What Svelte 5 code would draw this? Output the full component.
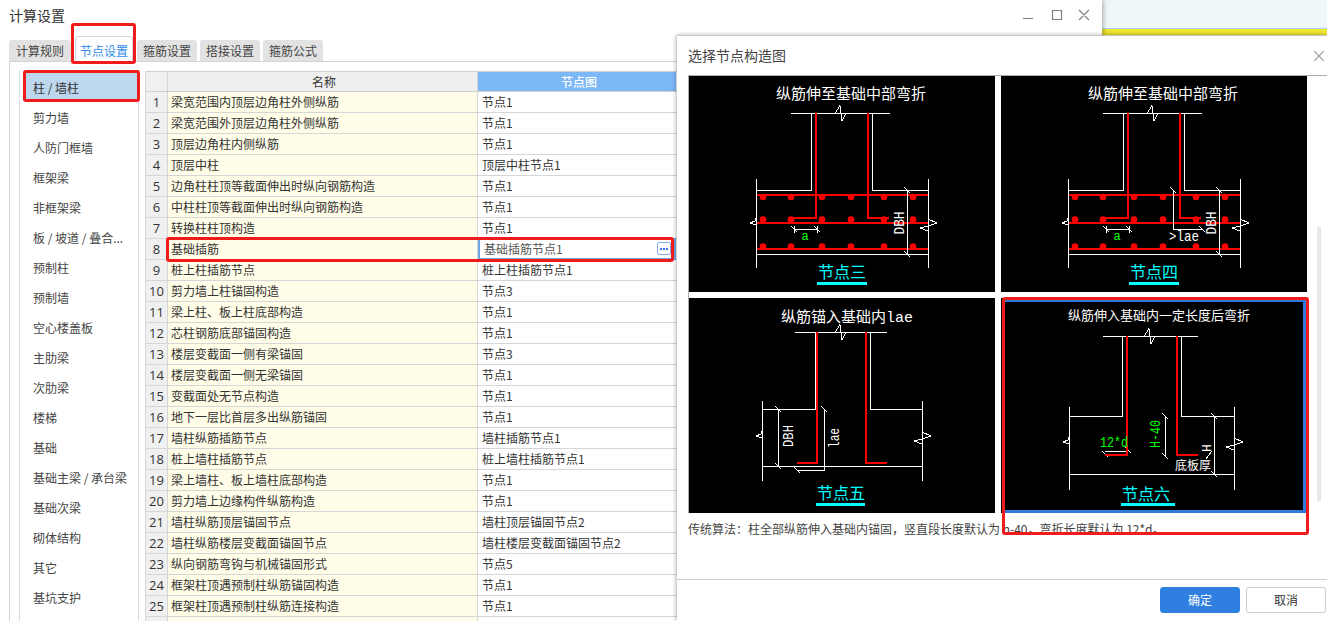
<script>
  const rows = [
    ['梁宽范围内顶层边角柱外侧纵筋','节点1'],['梁宽范围外顶层边角柱外侧纵筋','节点1'],['顶层边角柱内侧纵筋','节点1'],['顶层中柱','顶层中柱节点1'],
    ['边角柱柱顶等截面伸出时纵向钢筋构造','节点1'],['中柱柱顶等截面伸出时纵向钢筋构造','节点1'],['转换柱柱顶构造','节点1'],['基础插筋','基础插筋节点1'],
    ['桩上柱插筋节点','桩上柱插筋节点1'],['剪力墙上柱锚固构造','节点3'],['梁上柱、板上柱底部构造','节点1'],['芯柱钢筋底部锚固构造','节点1'],
    ['楼层变截面一侧有梁锚固','节点3'],['楼层变截面一侧无梁锚固','节点1'],['变截面处无节点构造','节点1'],['地下一层比首层多出纵筋锚固','节点1'],
    ['墙柱纵筋插筋节点','墙柱插筋节点1'],['桩上墙柱插筋节点','桩上墙柱插筋节点1'],['梁上墙柱、板上墙柱底部构造','节点1'],['剪力墙上边缘构件纵筋构造','节点1'],
    ['墙柱纵筋顶层锚固节点','墙柱顶层锚固节点2'],['墙柱纵筋楼层变截面锚固节点','墙柱楼层变截面锚固节点2'],['纵向钢筋弯钩与机械锚固形式','节点5'],
    ['框架柱顶遇预制柱纵筋锚固构造','节点1'],['框架柱顶遇预制柱纵筋连接构造','节点1'],['','']
  ];
  const menu = ['柱 / 墙柱','剪力墙','人防门框墙','框架梁','非框架梁','板 / 坡道 / 叠合...','预制柱','预制墙','空心楼盖板','主肋梁','次肋梁','楼梯','基础','基础主梁 / 承台梁','基础次梁','砌体结构','其它','基坑支护'];
  const tabs = ['计算规则','节点设置','箍筋设置','搭接设置','箍筋公式'];
  const dots = [74,102,133,162,195,224];
</script>

{#snippet brk(c, y)}
  <polyline class="w" points="{c-6},{y} {c-1},{y-8} {c+1},{y+7} {c+5},{y}" />
{/snippet}
{#snippet sideL(x, y)}
  <polyline class="w" points="{x},{y-5} {x-1},{y-2} {x-6},{y} {x},{y+2}" />
{/snippet}
{#snippet sideR(x, y)}
  <polyline class="w" points="{x},{y-4} {x+9},{y} {x},{y+3} {x-8},{y+5} {x},{y+8}" />
{/snippet}
{#snippet tick(x, y)}
  <line class="w" x1={x-3} y1={y-3} x2={x+3} y2={y+3} />
{/snippet}
{#snippet base(title, label)}
  <text class="title" x="162" y="23" text-anchor="middle">{title}</text>
  <path class="w" d="M102 37.5H201M122.5 37.5V114.5H67.5M183.5 37.5V114.5H239.5M67.5 103V192M239.5 103V192M67.5 178.5H239.5" />
  {@render brk(152, 37.5)}
  <path class="r" d="M127 37V142H104M179 37V142H200" />
  <path class="r" d="M68 119H239M68 147H239M68 173H239" />
  {#each dots as x}
    <circle class="dot" cx={x} cy="121" r="3.3" />
    <circle class="dot" cx={x} cy="143.5" r="3.3" />
    <circle class="dot" cx={x} cy="170.5" r="3.3" />
  {/each}
  <path class="w" d="M218.5 114.5V178.5M105.5 153.5H128.5M105.5 150V157M128.5 150V157" />
  {@render tick(218, 114)}{@render tick(218, 178)}{@render tick(105, 153)}{@render tick(128, 153)}
  {@render sideL(67, 147)}{@render sideR(239, 147)}
  <text class="dim tall" transform="translate(215 147) rotate(-90)" text-anchor="middle" textLength="23" lengthAdjust="spacingAndGlyphs">DBH</text>
  <text class="green" x="116" y="164" text-anchor="middle">a</text>
  <text class="label" x="153" y="202" text-anchor="middle">{label}</text>
  <rect class="cy" x="128" y="206" width="50" height="3" />
{/snippet}

<div class="screen">
  <div class="win">
    <header class="titlebar">
      <span class="wtitle">计算设置</span>
      <div class="controls">
        <svg width="66" height="14" viewBox="0 0 66 14">
          <path class="ico" d="M0 9.5H10M29.5 1.5H38.5V10.5H29.5ZM56 1L66 11M66 1L56 11" />
        </svg>
      </div>
    </header>
    <nav class="tabs">
      {#each tabs as t, i}
        <div class="tab" class:active={i === 1}>{t}</div>
      {/each}
    </nav>
    <div class="panel">
      <ul class="menu">
        {#each menu as m, i}
          <li class:on={i === 0}>{m}</li>
        {/each}
      </ul>
      <div class="table">
        <div class="row head">
          <div class="num"></div><div class="name">名称</div><div class="node">节点图</div>
        </div>
        {#each rows as r, i}
          <div class="row">
            <div class="num">{i < 25 ? i + 1 : ''}</div>
            <div class="name">{r[0]}</div>
            <div class="node" class:editing={i === 7}>
              <span>{r[1]}</span>
              {#if i === 7}
                <span class="more">
                  <svg width="12" height="11" viewBox="0 0 12 11"><path d="M2 5h2v2h-2zM5 5h2v2h-2zM8 5h2v2h-2z" fill="#2f7ad8" /></svg>
                </span>
              {/if}
            </div>
          </div>
        {/each}
      </div>
    </div>
  </div>

  <div class="backdrop">
    <div class="sky"></div>
    <div class="yellow"></div>
  </div>

  <section class="dialog">
    <header class="dhead">
      <span>选择节点构造图</span>
      <svg width="10" height="10" viewBox="0 0 10 10"><path class="ico light" d="M0 0L10 10M10 0L0 10" /></svg>
    </header>
    <div class="gallery">
      <svg class="pic" width="306" height="216" viewBox="0 0 306 216">
        {@render base('纵筋伸至基础中部弯折', '节点三')}
      </svg>
      <svg class="pic" width="306" height="216" viewBox="0 0 306 216">
        {@render base('纵筋伸至基础中部弯折', '节点四')}
        <path class="w" d="M172.5 114.5V153.5H201.5" />
        {@render tick(172, 114)}{@render tick(201, 153)}
        <text class="dim tall" x="168" y="165" textLength="30" lengthAdjust="spacingAndGlyphs">&gt;lae</text>
      </svg>
      <svg class="pic" width="306" height="215" viewBox="0 0 306 215">
        <text class="title" x="158" y="24" text-anchor="middle">纵筋锚入基础内<tspan class="mono">lae</tspan></text>
        <path class="w" d="M106 34.5H198M126.5 34.5V111.5H73.5M181.5 34.5V111.5H233.5M73.5 103V183M233.5 103V183M73.5 168.5H233.5M89.5 111.5V168.5M135.5 111.5V172.5H108.5" />
        {@render brk(152, 34.5)}
        {@render tick(89, 111)}{@render tick(89, 168)}{@render tick(135, 111)}{@render tick(108, 172)}
        {@render sideL(73, 138)}{@render sideR(233, 138)}
        <path class="r" d="M128 34V165H108M177 34V165H198" />
        <text class="dim tall" transform="translate(104 138) rotate(-90)" text-anchor="middle" textLength="22" lengthAdjust="spacingAndGlyphs">DBH</text>
        <text class="dim tall" transform="translate(150 140) rotate(-90)" text-anchor="middle" textLength="20" lengthAdjust="spacingAndGlyphs">lae</text>
        <text class="label" x="152" y="201" text-anchor="middle">节点五</text>
        <rect class="cy" x="127" y="205" width="49" height="3" />
      </svg>
      <div class="chosen">
        <svg class="pic" width="306" height="215" viewBox="0 0 306 215">
          <text class="title small" x="158" y="22" text-anchor="middle">纵筋伸入基础内一定长度后弯折</text>
          <path class="w" d="M102 38.5H197M121.5 38.5V118.5H68.5M180.5 38.5V118.5H233.5M68.5 109V192M233.5 109V192M68.5 176.5H233.5M213.5 118.5V176.5M164.5 118V158M104 153.5H127" />
          {@render brk(149, 38.5)}
          {@render tick(213, 118)}{@render tick(213, 176)}{@render tick(164, 118)}{@render tick(164, 158)}{@render tick(104, 156)}{@render tick(127, 152)}
          {@render sideL(68, 144)}{@render sideR(233, 144)}
          <path class="r" d="M126 38V156.5H104M176 38V156.5H197" />
          <text class="green tall" x="99" y="149" textLength="28" lengthAdjust="spacingAndGlyphs">12*d</text>
          <text class="green tall" transform="translate(159 136) rotate(-90)" text-anchor="middle" textLength="28" lengthAdjust="spacingAndGlyphs">H-40</text>
          <text class="dim" transform="translate(210 150) rotate(-90)" text-anchor="middle">H</text>
          <line class="w" x1="205" y1="161" x2="211" y2="153" />
          <text class="white12" x="174" y="172">底板厚</text>
          <text class="label" x="145" y="202" text-anchor="middle">节点六</text>
          <rect class="cy" x="120" y="205" width="54" height="3" />
        </svg>
      </div>
    </div>
    <p class="desc">传统算法：柱全部纵筋伸入基础内锚固，竖直段长度默认为 h-40，弯折长度默认为 12*d。</p>
    <footer class="dfoot">
      <button class="primary">确定</button>
      <button>取消</button>
    </footer>
    <div class="scroll"></div>
  </section>

  <i class="mark m-tab"></i>
  <i class="mark m-menu"></i>
  <i class="mark m-row"></i>
  <i class="mark m-pic"></i>
</div>

<style>
  :global(body) { margin: 0; background: #fff; }
  .screen {
    position: relative; width: 1327px; height: 621px; overflow: hidden; display: flex;
    font: 12px/1.2 "Noto Sans CJK SC", "Liberation Sans", sans-serif; color: #333;
  }
  .win { width: 1102px; flex: none; background: #fff; box-shadow: 1px 0 5px rgba(0,0,0,.35); position: relative; z-index: 1; }
  .titlebar { height: 36px; display: flex; justify-content: space-between; padding: 9px 13px 0 9px; box-sizing: border-box; }
  .wtitle { font-size: 14px; line-height: 15px; margin-top: -1px; }
  .controls { line-height: 0; }
  .ico { fill: none; stroke: #7d7d7d; stroke-width: 1.2; }
  .ico.light { stroke: #9a9a9a; }
  .tabs { display: flex; align-items: flex-end; gap: 3px; height: 25px; padding-left: 9px; position: relative; z-index: 1; }
  .tab {
    width: 60px; height: 21px; line-height: 22px; background: #e2e2e2; border-radius: 3px 3px 0 0;
    text-align: center; color: #444;
  }
  .tab:first-child { width: 62px; margin-right: 1px; }
  .tab.active { background: #fff; color: #2f8ae8; height: 26px; line-height: 27px; margin-bottom: -1px; width: 58px; border: 1px solid #d8d8d8; border-bottom: 0; box-sizing: border-box; margin-right: 1px; }
  .panel {
    margin-left: 9px; border-left: 1px solid #d4d4d4; border-top: 1px solid #d4d4d4; height: 560px;
    display: flex; gap: 6px; padding: 8px 0 0 9px; box-sizing: border-box;
  }
  .menu { list-style: none; margin: 0; padding: 3px 0 0 3px; width: 120px; height: 560px; flex: none; box-sizing: border-box; border: 1px solid #dcdcdc; border-width: 0 1px; }
  .menu li { height: 30px; line-height: 30px; padding-left: 10px; color: #444; }
  .menu li.on { height: 28px; margin-bottom: 2px; background: #bdd7ee; color: #333; }
  .table { width: 531px; margin-top: 1px; border-top: 1px solid #d0d0d0; border-left: 1px solid #d8d8d8; flex: none; }
  .row { display: grid; grid-template-columns: 22px 310px 198px; height: 21px; box-sizing: border-box; border-bottom: 1px solid #d6d6d6; line-height: 20px; }
  .row.head { height: 20px; border-bottom-color: #d0d0d0; line-height: 19px; }
  .num { background: #f0f0f0; border-right: 1px solid #d6d6d6; text-align: center; font-size: 13px; font-family: "Open Sans", "Liberation Sans", sans-serif; }
  .name { background: #fffde8; padding-left: 3px; border-right: 1px solid #d6d6d6; white-space: nowrap; overflow: hidden; }
  .node { background: #fff; padding-left: 4px; white-space: nowrap; position: relative; }
  .head .name { background: #efefef; text-align: center; }
  .head .node { background: #7db8f6; color: #fff; text-align: center; font-weight: 500; }
  .node.editing { border: 2px solid #6fa5e5; margin: -1px 0; padding-left: 4px; box-sizing: border-box; height: 22px; line-height: 18px; color: #555; }
  .more { position: absolute; right: 3px; top: 2px; width: 14px; height: 13px; box-sizing: border-box; border: 1px solid #7fb0ea; border-radius: 2px; line-height: 0; }
  .backdrop { flex: 1; display: flex; flex-direction: column; }
  .sky { height: 28px; background: #f0f7fb; border-bottom: 1px solid #a9d2f2; }
  .yellow { height: 6px; background: linear-gradient(#f3ea30, #e6de30); }
  .dialog {
    position: absolute; left: 677px; top: 35px; width: 650px; height: 586px; background: #fff; z-index: 2;
    border-top: 1px solid #c8c8c8; box-sizing: border-box; box-shadow: -1px 0 4px rgba(0,0,0,.3);
    display: flex; flex-direction: column;
  }
  .dhead { height: 39px; flex: none; display: flex; justify-content: space-between; align-items: center; padding: 0 3px 0 11px; font-size: 14px; color: #444; box-sizing: border-box; }
  .gallery {
    display: grid; grid-template-columns: 306px 306px; grid-template-rows: 216px 215px; gap: 6px;
    margin-left: 11px; padding-left: 1px; border-top: 1px solid #aaa;
    background: linear-gradient(#aaa, #aaa) left top / 1px 438px no-repeat;
  }
  .pic { display: block; background: #000; }
  .chosen { position: relative; }
  .chosen::after { content: ""; position: absolute; inset: 1px 1px 0 1px; border: 3px solid #2f7ad8; }
  .w { fill: none; stroke: #fff; stroke-width: 1; shape-rendering: crispEdges; }
  .r { fill: none; stroke: #f00; stroke-width: 2; shape-rendering: crispEdges; }
  .dot { fill: #f00; }
  .cy { fill: #0ff; }
  .title { font: 400 15px "Noto Sans CJK SC", sans-serif; fill: #fff; }
  .title.small { font-size: 13px; }
  .mono { font-family: "Liberation Mono", monospace; }
  .label { font: 400 16px "Noto Sans CJK SC", sans-serif; fill: #0ff; }
  .dim { font: 13px "Liberation Mono", monospace; fill: #fff; }
  .green { font: 12px "Liberation Mono", monospace; fill: #0f0; }
  .dim.tall, .green.tall { font-size: 15px; }
  .white12 { font: 400 12px "Noto Sans CJK SC", sans-serif; fill: #fff; }
  .desc { margin: 7px 0 0 11px; height: 17px; line-height: 17px; color: #444; white-space: nowrap; }
  .dfoot {
    margin-top: 42px; border-top: 1px solid #ccc; padding: 7px 1px 0 0; display: flex; justify-content: flex-end; gap: 6px; flex: none;
  }
  .dfoot button { width: 80px; height: 26px; box-sizing: border-box; border: 1px solid #ccc; border-radius: 3px; background: #fff; color: #333; font: inherit; padding: 0; }
  .dfoot .primary { background: #2e7fe0; border-color: #2e7fe0; color: #fff; }
  .scroll { position: absolute; left: 640px; top: 191px; width: 4px; height: 274px; background: #e8e8e8; }
  .mark { position: absolute; z-index: 3; box-sizing: border-box; border: 3px solid #f01c1c; border-radius: 3px; pointer-events: none; }
  .m-tab { left: 71px; top: 23px; width: 65px; height: 41px; }
  .m-menu { left: 23px; top: 70px; width: 117px; height: 32px; }
  .m-row { left: 166px; top: 237px; width: 508px; height: 25px; }
  .m-pic { left: 1002px; top: 297px; width: 307px; height: 238px; }
</style>
